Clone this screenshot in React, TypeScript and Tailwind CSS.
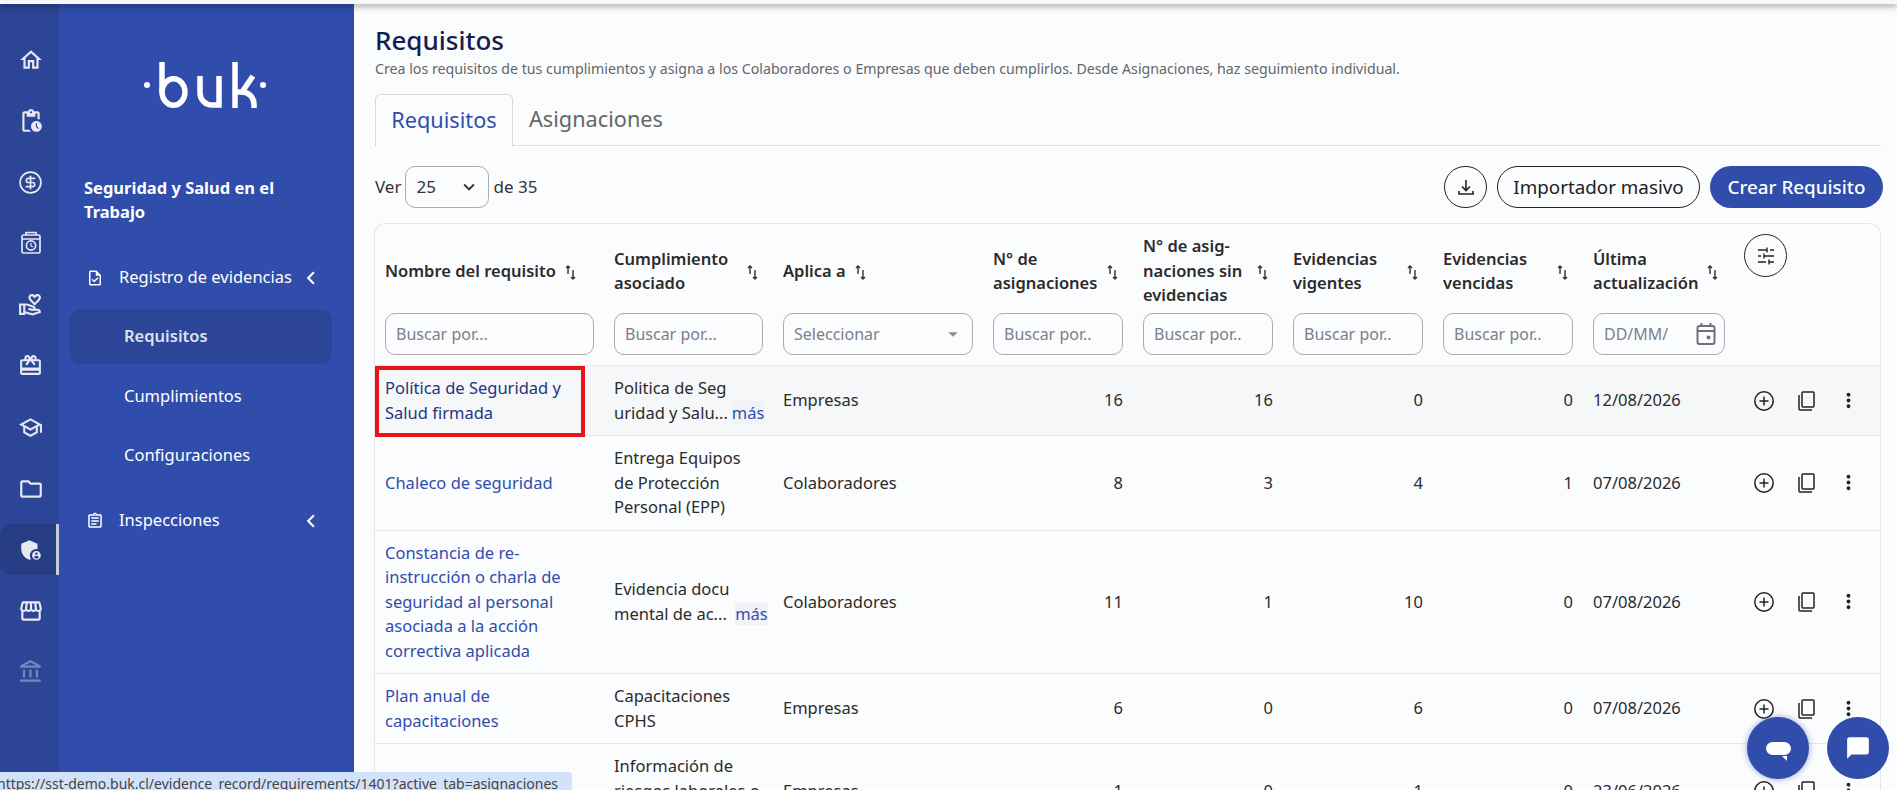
import {
  MdOutlineHome,
  MdOutlinePendingActions,
  MdOutlineVolunteerActivism,
  MdOutlineRedeem,
  MdOutlineSchool,
  MdOutlineFolder,
  MdAdminPanelSettings,
  MdOutlineStorefront,
  MdOutlineAccountBalance,
  MdOutlineTask,
  MdOutlineAssignment,
  MdChevronLeft,
  MdMoreVert,
  MdKeyboardArrowDown,
  MdArrowDropDown,
  MdChatBubble,
} from "react-icons/md";
import { CircleDollarSign } from "lucide-react";

const SortIcon = () => (
  <svg width="14" height="17" viewBox="0 0 14 17" fill="none" stroke="#333" strokeWidth="1.4" className="mr-[3px] mt-[2px] shrink-0">
    <path d="M4 10V2M2 4l2-2 2 2" />
    <path d="M9 6v9M7 13l2 2 2-2" />
  </svg>
);

const AddIcon = () => (
  <svg width="22" height="22" viewBox="0 0 22 22" fill="none" stroke="#222" strokeWidth="1.5">
    <circle cx="11" cy="11" r="9.2" />
    <path d="M11 6.5v9M6.5 11h9" />
  </svg>
);

const CopyIcon = () => (
  <svg width="20" height="22" viewBox="0 0 20 22" fill="none" stroke="#222" strokeWidth="1.5">
    <rect x="6" y="2" width="12" height="15" rx="1" />
    <path d="M3 5v14a1 1 0 0 0 1 1h12" />
  </svg>
);

const DownloadIcon = () => (
  <svg width="20" height="20" viewBox="0 0 20 20" fill="none" stroke="#222" strokeWidth="1.6">
    <path d="M10 3v10M6 9.5l4 4 4-4" />
    <path d="M3 14v3h14v-3" />
  </svg>
);

const TuneIcon = () => (
  <svg width="22" height="22" viewBox="0 0 22 22" fill="none" stroke="#222" strokeWidth="1.4">
    <path d="M3 5h9M15 5h4M12 2.5v5" />
    <path d="M3 11h3M9 11h10M9 8.5v5" />
    <path d="M3 17h8M14 17h5M14 14.5v5" />
  </svg>
);

const CalendarIcon = () => (
  <svg width="24" height="26" viewBox="0 0 24 26" fill="none" stroke="#6f7177" strokeWidth="2" className="shrink-0">
    <rect x="3.5" y="5" width="17" height="18" rx="2" />
    <path d="M3.5 10h17M7.5 2v3M16.5 2v3" />
    <circle cx="14.5" cy="16.5" r="2" fill="#6f7177" stroke="none" />
  </svg>
);

const BagClockIcon = () => (
  <svg width="24" height="26" viewBox="0 0 24 26" fill="none" stroke="#e6e8f2" strokeWidth="1.7">
    <rect x="3" y="5" width="18" height="18" rx="1.5" />
    <path d="M7 5V2.5h10V5M3 9h18" />
    <circle cx="12" cy="15.5" r="4.6" />
    <path d="M12 13v2.8l1.8 1" strokeWidth="1.2" />
  </svg>
);

const railIcons = [
  <MdOutlineHome size={26} />,
  <MdOutlinePendingActions size={26} />,
  <CircleDollarSign size={25} strokeWidth={1.6} />,
  <BagClockIcon />,
  <MdOutlineVolunteerActivism size={25} />,
  <MdOutlineRedeem size={25} />,
  <MdOutlineSchool size={25} />,
  <MdOutlineFolder size={26} />,
  <MdAdminPanelSettings size={26} />,
  <MdOutlineStorefront size={26} />,
  <span className="opacity-40">
    <MdOutlineAccountBalance size={26} />
  </span>,
];

const Rail = () => (
  <div className="flex w-[59px] shrink-0 flex-col bg-[#2c4596] pt-[30px] text-[#e6e8f2]">
    {railIcons.map((icon, i) => (
      <div
        key={i}
        className={
          i === 8
            ? "flex h-[51px] items-center justify-center mb-[10.3px] rounded-l-xl border-r-[3px] border-[#c9cbd3] bg-[#263c85] pl-[5px]"
            : "flex h-[51px] items-center justify-center mb-[10.3px] pl-[2px]"
        }
      >
        {icon}
      </div>
    ))}
  </div>
);

const Logo = () => (
  <svg width="126" height="50" viewBox="0 0 126 50" fill="none" stroke="white" strokeWidth="5.5" className="ml-[84px]">
    <circle cx="4" cy="25" r="3" fill="white" stroke="none" />
    <circle cx="120" cy="25" r="3" fill="white" stroke="none" />
    <path d="M19 2V32" />
    <ellipse cx="30.5" cy="32" rx="11.5" ry="13.3" />
    <path d="M57 16V33a12 12 0 0 0 12 12h7V16" />
    <path d="M92 2V48M92 32h7a12 12 0 0 1 12 12v4M99 32L110 16" />
  </svg>
);

const Sidebar = () => (
  <div className="flex w-[295px] shrink-0 flex-col bg-[#304dab] text-white">
    <div className="pt-[56px]">
      <Logo />
    </div>
    <div className="mt-[66px] pl-[25px] pr-4 text-[16.5px] font-bold leading-[24px]">
      Seguridad y Salud en el
      <br />
      Trabajo
    </div>
    <div className="mt-[26px] flex h-[55px] items-center justify-between pl-[27px] pr-[30px] text-[16.5px]">
      <span className="flex items-center">
        <MdOutlineTask size={18} className="mr-[15px]" />
        Registro de evidencias
      </span>
      <MdChevronLeft size={26} />
    </div>
    <div className="mx-[10px] mt-[4px] flex h-[55px] w-[263px] items-center rounded-xl bg-[#2c4596] pl-[55px] text-[16.5px] font-semibold text-[#dfe2ee]">
      Requisitos
    </div>
    <div className="mt-[5px] flex h-[55px] items-center pl-[65px] text-[16.5px]">Cumplimientos</div>
    <div className="mt-[4px] flex h-[55px] items-center pl-[65px] text-[16.5px]">Configuraciones</div>
    <div className="mt-[10px] flex h-[55px] items-center justify-between pl-[27px] pr-[30px] text-[16.5px]">
      <span className="flex items-center">
        <MdOutlineAssignment size={18} className="mr-[15px]" />
        Inspecciones
      </span>
      <MdChevronLeft size={26} />
    </div>
  </div>
);

const Filter = ({ placeholder }: { placeholder: string }) => (
  <div className="flex h-[42px] items-center rounded-[10px] border border-[#a9abb0] px-[10px] text-[16px] font-normal text-[#7d7f85]">
    <span className="overflow-hidden whitespace-nowrap">{placeholder}</span>
  </div>
);

const headers: { label: React.ReactNode; filter: React.ReactNode }[] = [
  { label: "Nombre del requisito", filter: <Filter placeholder="Buscar por..." /> },
  {
    label: (
      <>
        Cumplimiento
        <br />
        asociado
      </>
    ),
    filter: <Filter placeholder="Buscar por..." />,
  },
  {
    label: "Aplica a",
    filter: (
      <div className="flex h-[42px] items-center justify-between rounded-[10px] border border-[#a9abb0] pl-[10px] pr-[8px] text-[16px] font-normal text-[#7d7f85]">
        Seleccionar
        <MdArrowDropDown size={22} className="text-[#8a8c92]" />
      </div>
    ),
  },
  {
    label: (
      <>
        N° de
        <br />
        asignaciones
      </>
    ),
    filter: <Filter placeholder="Buscar por.." />,
  },
  {
    label: (
      <>
        N° de asig-
        <br />
        naciones sin
        <br />
        evidencias
      </>
    ),
    filter: <Filter placeholder="Buscar por.." />,
  },
  {
    label: (
      <>
        Evidencias
        <br />
        vigentes
      </>
    ),
    filter: <Filter placeholder="Buscar por.." />,
  },
  {
    label: (
      <>
        Evidencias
        <br />
        vencidas
      </>
    ),
    filter: <Filter placeholder="Buscar por.." />,
  },
  {
    label: (
      <>
        Última
        <br />
        actualización
      </>
    ),
    filter: (
      <div className="mr-[-2px] flex h-[42px] items-center justify-between rounded-[10px] border border-[#a9abb0] pl-[10px] pr-[6px] text-[16px] font-normal text-[#7d7f85]">
        <span className="w-[64px] overflow-hidden whitespace-nowrap">DD/MM/</span>
        <CalendarIcon />
      </div>
    ),
  },
];

const More = ({ a, b }: { a: string; b: string }) => (
  <>
    <span className="whitespace-nowrap">{a}</span>
    <br />
    <span className="whitespace-nowrap">
      {b}
      <span className="ml-1 bg-[#f2f3f6] text-[#304dab]">más</span>
    </span>
  </>
);

const rows = [
  {
    name: "Política de Seguridad y Salud firmada",
    compliance: <More a="Politica de Seg" b="uridad y Salu..." />,
    applies: "Empresas",
    nums: [16, 16, 0, 0],
    date: "12/08/2026",
  },
  {
    name: "Chaleco de seguridad",
    compliance: "Entrega Equipos de Protección Personal (EPP)",
    applies: "Colaboradores",
    nums: [8, 3, 4, 1],
    date: "07/08/2026",
  },
  {
    name: "Constancia de re-instrucción o charla de seguridad al personal asociada a la acción correctiva aplicada",
    compliance: <More a="Evidencia docu" b="mental de ac... " />,
    applies: "Colaboradores",
    nums: [11, 1, 10, 0],
    date: "07/08/2026",
  },
  {
    name: "Plan anual de capacitaciones",
    compliance: "Capacitaciones CPHS",
    applies: "Empresas",
    nums: [6, 0, 6, 0],
    date: "07/08/2026",
  },
  {
    name: "Constancia de entrega firmada",
    compliance: "Información de riesgos laborales o ODI vigente",
    applies: "Empresas",
    nums: [1, 0, 1, 0],
    date: "23/06/2026",
  },
];

const td = "px-[10px] py-[10px] align-middle";

const Table = () => (
  <div className="ml-[-1px] mt-[15px] rounded-t-xl border-x border-t border-[#e4e6ea]">
    <table className="w-full table-fixed border-collapse text-[16.5px] leading-[24.5px] text-[#2b2b2b]">
      <colgroup>
        <col className="w-[229px]" />
        <col className="w-[169px]" />
        <col className="w-[210px]" />
        <col className="w-[150px]" />
        <col className="w-[150px]" />
        <col className="w-[150px]" />
        <col className="w-[150px]" />
        <col className="w-[150px]" />
        <col />
      </colgroup>
      <thead>
        <tr className="border-b border-[#e4e6ea]">
          {headers.map((h, i) => (
            <th key={i} className="px-[10px] pb-[10px] pt-[10px] text-left font-semibold">
              <div className="flex h-[74px] items-center gap-[8px]">
                <span className={i === 0 || i === 2 ? "whitespace-nowrap" : "flex-1 whitespace-nowrap"}>{h.label}</span>
                <SortIcon />
              </div>
              <div className="mt-[5px]">{h.filter}</div>
            </th>
          ))}
          <th className="align-top pt-[10px] text-left">
            <div className="ml-[11px] flex h-[43px] w-[43px] items-center justify-center rounded-full border border-[#222]">
              <TuneIcon />
            </div>
          </th>
        </tr>
      </thead>
      <tbody>
        {rows.map((r, i) => (
          <tr key={i} className={i === 0 ? "border-b border-[#e4e6ea] bg-[#f6f7f9]" : "border-b border-[#e4e6ea]"}>
            <td className={td}>
              <a className={i === 0 ? "text-[#1f3580]" : "text-[#304dab]"}>{r.name}</a>
            </td>
            <td className={td}>{r.compliance}</td>
            <td className={td}>{r.applies}</td>
            {r.nums.map((n, j) => (
              <td key={j} className={td + " text-right"}>
                {n}
              </td>
            ))}
            <td className={td}>{r.date}</td>
            <td className="py-[10px] align-middle">
              <div className="flex items-center pl-[20px] text-[#222]">
                <AddIcon />
                <span className="ml-[21px]">
                  <CopyIcon />
                </span>
                <MdMoreVert size={23} className="ml-[21px]" />
              </div>
            </td>
          </tr>
        ))}
      </tbody>
    </table>
  </div>
);

const App = () => {
  return (
    <div
      className="relative flex h-[790px] flex-col overflow-hidden bg-[#fbfcfe]"
      style={{ fontFamily: '"Noto Sans", "Open Sans", sans-serif' }}
    >
      <div className="relative z-10 h-[4px] shrink-0 bg-[#f7f7f7] shadow-[0_2px_6px_rgba(0,0,0,0.45)]" />
      <div className="flex min-h-0 flex-1">
        <Rail />
        <Sidebar />
        <main className="min-w-0 flex-1 pl-[21px] pr-[16px]">
          <h1 className="mt-[21px] text-[26px] font-medium leading-[30px] text-[#12204f]">Requisitos</h1>
          <p className="mt-[4px] text-[14.2px] leading-[20px] text-[#666]">
            Crea los requisitos de tus cumplimientos y asigna a los Colaboradores o Empresas que deben cumplirlos. Desde
            Asignaciones, haz seguimiento individual.
          </p>
          <div className="mt-[15px] flex h-[52px] border-b border-[#e0e2e6]">
            <div className="flex h-[52px] w-[138px] items-center justify-center rounded-t-md border-x border-t border-[#d8dade] bg-[#fbfcfe] text-[21.7px] text-[#304dab]">
              Requisitos
            </div>
            <div className="flex items-center pl-[16px] text-[21.7px] text-[#666]">Asignaciones</div>
          </div>
          <div className="mt-[20px] flex h-[42px] items-center justify-between text-[17px] text-[#333]">
            <div className="flex items-center">
              Ver
              <div className="mx-[4px] flex h-[42px] w-[84px] items-center justify-between rounded-[10px] border border-[#a9abb0] pl-[10px] pr-[8px]">
                25
                <MdKeyboardArrowDown size={22} />
              </div>
              de 35
            </div>
            <div className="mr-[-2px] flex items-center gap-[10px]">
              <div className="flex h-[42px] w-[43px] items-center justify-center rounded-full border border-[#222]">
                <DownloadIcon />
              </div>
              <div className="flex h-[42px] w-[203px] items-center justify-center rounded-full border border-[#222] text-[18.8px] text-[#222]">
                Importador masivo
              </div>
              <div className="flex h-[42px] w-[173px] items-center justify-center rounded-full bg-[#304dab] text-[18.8px] font-medium text-white">
                Crear Requisito
              </div>
            </div>
          </div>
          <Table />
        </main>
      </div>

      {/* red highlight drawn over the first row */}
      <div className="absolute left-[375px] top-[366px] h-[71px] w-[210px] border-[4px] border-[#e8141c]" />

      {/* floating chat buttons */}
      <div className="absolute left-[1747px] top-[717px] flex h-[62px] w-[62px] items-center justify-center rounded-full bg-[#304dab] shadow-[0_0_6px_rgba(48,77,171,0.5)]">
        <div className="relative h-[13px] w-[25px] rounded-full bg-white">
          <div className="absolute right-[4px] top-[14px] h-0 w-0 border-l-[5px] border-t-[5px] border-l-transparent border-t-white" />
        </div>
      </div>
      <div className="absolute left-[1827px] top-[717px] flex h-[62px] w-[62px] items-center justify-center rounded-full bg-[#304dab] text-white">
        <MdChatBubble size={26} />
      </div>

      {/* browser status bar */}
      <div className="absolute bottom-0 left-0 flex h-[18px] w-[572px] items-start overflow-hidden rounded-tr bg-[#d3e2fb] text-[14px] leading-[23px] text-[#444]">
        <span className="ml-[-3px] whitespace-nowrap">
          https://sst-demo.buk.cl/evidence_record/requirements/1401?active_tab=asignaciones
        </span>
      </div>
    </div>
  );
};

export default App;
